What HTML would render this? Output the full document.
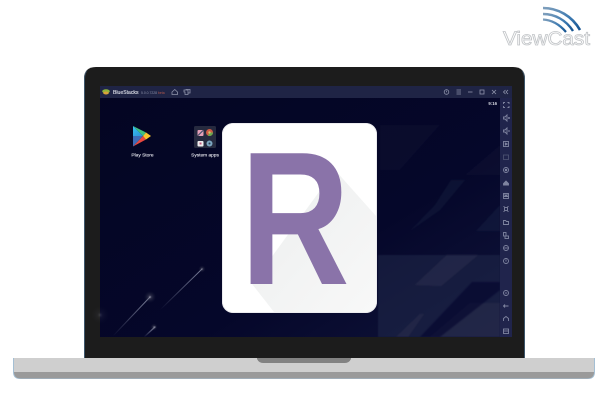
<!DOCTYPE html>
<html><head><meta charset="utf-8">
<style>
html,body{margin:0;padding:0;background:#fff;width:602px;height:414px;overflow:hidden}
svg{display:block}
text{font-family:"Liberation Sans",sans-serif}
</style></head><body>
<svg width="602" height="414" viewBox="0 0 602 414" xmlns="http://www.w3.org/2000/svg">
<defs>
<linearGradient id="bg" x1="0" y1="0" x2="1" y2="1">
<stop offset="0" stop-color="#040522"/><stop offset=".62" stop-color="#05072a"/><stop offset="1" stop-color="#10143a"/>
</linearGradient>
<radialGradient id="glow"><stop offset="0" stop-color="#aab" stop-opacity=".8"/><stop offset=".3" stop-color="#667" stop-opacity=".35"/><stop offset="1" stop-color="#334" stop-opacity="0"/></radialGradient>
<linearGradient id="arc" x1="0" y1="0" x2="1" y2="1"><stop offset="0" stop-color="#7f9fbc"/><stop offset=".6" stop-color="#3a78b0"/><stop offset="1" stop-color="#14528f"/></linearGradient>
<linearGradient id="gp1" x1="0" y1="0" x2="1" y2="1"><stop offset="0" stop-color="#35c4f0"/><stop offset="1" stop-color="#2b8fd8"/></linearGradient>
<linearGradient id="shd" x1="0" y1="0" x2="1" y2="1"><stop offset="0" stop-color="#eceeee"/><stop offset="1" stop-color="#f8f8f8"/></linearGradient>
<linearGradient id="s1" x1="1" y1="0" x2="0" y2="1"><stop offset="0" stop-color="#9ba0b8" stop-opacity=".8"/><stop offset="1" stop-color="#9ba0b8" stop-opacity="0"/></linearGradient>
<filter id="b" x="-5%" y="-5%" width="110%" height="110%"><feGaussianBlur stdDeviation=".7"/></filter>
<filter id="t" x="-5%" y="-5%" width="110%" height="110%"><feGaussianBlur stdDeviation=".3"/></filter>
<clipPath id="sc"><rect x="100" y="98" width="400" height="239"/></clipPath>
</defs>

<!-- ViewCast logo -->
<g fill="none" stroke="url(#arc)">
<path d="M543 8C558 8 572 16 580 30" stroke-width="2.600"/>
<path d="M543 14C555 14 566 20 573 31" stroke-width="2.400"/>
<path d="M543 19.500C552 20 560 25 566 32" stroke-width="2.200"/>
</g>
<text x="503" y="45" font-size="19" fill="#fff" stroke="#c2c5c8" stroke-width=".8" textLength="87" lengthAdjust="spacingAndGlyphs">ViewCast</text>

<!-- Lid -->
<path d="M84 358V79Q84 67 96 67H513Q525 67 525 79V358Z" fill="#1c1c1c"/>
<path d="M84 358V79Q84 72 88 70Q85 73 85 79V358Z" fill="#3d566b"/>
<path d="M525 358V79Q525 72 521 70Q524 73 524 79V358Z" fill="#3d566b"/>

<!-- Screen -->
<rect x="100" y="86" width="412" height="251" fill="url(#bg)"/>
<g fill="#262b4c" clip-path="url(#sc)"><g filter="url(#b)">
<polygon points="378,255 500,255 500,337 378,337" opacity=".5"/>
<polygon points="415,285 447,255 478,255 441,286" opacity=".6"/>
<polygon points="410,231 435,205 451,180 465,180 440,210" opacity=".25"/>
<polygon points="476,231 500,205 500,231" opacity=".3"/>
<polygon points="430,337 470,303 500,303 500,337" opacity=".55"/>
<polygon points="396,337 420,314 424,314 408,337" opacity=".5"/>
<polygon points="380,125 440,125 400,170 380,170" opacity=".1"/>
<polygon points="465,175 500,175 500,145" opacity=".12"/>
</g>
<polygon points="420,337 472,282 500,282 500,290 440,337" fill="#04062a" opacity=".55" filter="url(#b)"/>
</g>
<!-- shooting stars -->
<g fill="none" stroke-linecap="round">
<path d="M202 269L160 310" stroke="url(#s1)" stroke-width=".9"/>
<path d="M150 297L113 336" stroke="url(#s1)" stroke-width="1"/>
<path d="M155 327L144 337" stroke="url(#s1)" stroke-width="1.300"/>
</g>
<circle cx="202" cy="269" r="3.500" fill="url(#glow)"/>
<circle cx="150" cy="297" r="6" fill="url(#glow)"/>
<circle cx="154" cy="327" r="3.500" fill="url(#glow)"/>
<circle cx="100" cy="315" r="9" fill="url(#glow)" opacity=".3"/>

<!-- Title bar -->
<rect x="100" y="86" width="412" height="12" fill="#1f2445"/>
<ellipse cx="106" cy="91.300" rx="3.800" ry="2" fill="#8fb53a"/>
<ellipse cx="106" cy="93" rx="2.800" ry="1.500" fill="#d9a23a"/>
<text x="113" y="94" font-size="5.800" fill="#dfe1ea" stroke="#dfe1ea" stroke-width=".12" textLength="25.500" lengthAdjust="spacingAndGlyphs">BlueStacks</text>
<text x="141" y="94" font-size="3.400" fill="#8b90a8">5.0.0.7228</text>
<text x="158" y="94" font-size="3.400" fill="#b3574c">beta</text>
<g fill="none" stroke="#8f94ab" stroke-width=".8" filter="url(#t)">
<path d="M172 92L174.800 89.500L177.500 92V94.500H172Z"/>
<path d="M184 90H188V94.500H185V92H184ZM186 90V89.500H190V93H188"/>
<circle cx="446.500" cy="92" r="2.300"/>
<path d="M446.500 90.800V92.300"/>
<path d="M456.500 90H461M456.500 92H461M456.500 94H461"/>
<path d="M468 92H472.500"/>
<rect x="480" y="90" width="4" height="4"/>
<path d="M492 90L496 94M496 90L492 94"/>
<path d="M505.500 90L503.500 92L505.500 94M508 90L506 92L508 94"/>
</g>

<!-- Sidebar -->
<rect x="500" y="98" width="12" height="239" fill="#20244c"/>
<text x="497" y="105" font-size="4.300" font-weight="700" text-anchor="end" fill="#d8dae3">9:16</text>
<g fill="none" stroke="#7f84a0" stroke-width=".9" filter="url(#t)">
<path d="M503.500 104V102.500H505M507.500 102.500H509V104M503.500 106V107.500H505M507.500 107.500H509V106"/>
<path d="M503.500 117H505L507 115V121L505 119H503.500ZM508 118H510M509 117V119"/>
<path d="M503.500 130H505L507 128V134L505 132H503.500ZM508 131H510"/>
<rect x="503.500" y="141.500" width="5" height="5"/>
<path d="M505.300 143L507.300 144L505.300 145Z" fill="#7f84a0"/>
<rect x="503.500" y="155" width="5" height="4.500" stroke="#4c5070"/>
<circle cx="506" cy="170" r="2.500"/>
<circle cx="506" cy="170" r=".8" fill="#7f84a0"/>
<path d="M503.500 185V183.500L506 181L508.500 183.500V185Z" fill="#7f84a0"/>
<rect x="503.500" y="193.500" width="5" height="5"/>
<path d="M505 193.500V195.500H507V193.500M503.500 196.500H508.500"/>
<path d="M503.500 206.500H504.500M507.500 206.500H508.500M503.500 211.500H504.500M507.500 211.500H508.500"/>
<rect x="504.500" y="207.500" width="3" height="3"/>
<path d="M503.500 220.500H505.500L506.500 221.500H508.500V224.500H503.500Z"/>
<rect x="503.500" y="232.500" width="2.500" height="3.500"/>
<rect x="505" y="236" width="3.500" height="2.500"/>
<circle cx="506" cy="248" r="2.500"/>
<path d="M503.500 248H508.500"/>
<circle cx="506" cy="261" r="2.500"/>
<path d="M506 259.500V261.500"/>
<circle cx="506" cy="293" r="2.500"/>
<path d="M504.800 293H507.200"/>
<path d="M503.500 306H508.500M505 304.500L503.500 306L505 307.500"/>
<path d="M503.500 321V318.500L506 316.500L508.500 318.500V321"/>
<rect x="503.500" y="329" width="5" height="4.500"/>
<path d="M503.500 331H508.500"/>
</g>

<!-- Play Store icon -->
<polygon points="133,126 133,136 143,136" fill="url(#gp1)"/>
<polygon points="133,146.500 133,136 143,136" fill="#4378c9" opacity=".9"/>
<polygon points="133,126 143,136 146,132.500" fill="#3fc07f"/>
<polygon points="133,146.500 143,136 146,139.500" fill="#e9483f"/>
<polygon points="146,132.500 143,136 146,139.500 151,136" fill="#f8c52c"/>
<text x="142.500" y="156.300" font-size="4.800" fill="#e4e5ec" stroke="#e4e5ec" stroke-width=".1" text-anchor="middle">Play Store</text>

<!-- System apps -->
<rect x="194" y="126" width="22" height="22" rx="1.500" fill="#262a3f"/>
<rect x="197.500" y="130" width="6" height="6" rx="1" fill="#e5a0b8"/>
<path d="M198 135.500L203 130.500" stroke="#44506e" stroke-width="1.200"/>
<circle cx="209.500" cy="132.500" r="3.500" fill="#cf5a45"/>
<path d="M209.500 132.500L213 132.500A3.500 3.500 0 0 1 208 135.700Z" fill="#6aa84f"/>
<circle cx="209.500" cy="132.500" r="1.200" fill="#d9c06a"/>
<rect x="197.500" y="141" width="6" height="5.500" rx="1" fill="#eee"/>
<rect x="199.500" y="142.500" width="2" height="2" fill="#c0567c"/>
<circle cx="209.500" cy="143.500" r="3" fill="#7da6c0"/>
<circle cx="209.500" cy="143.500" r="1" fill="#2c3f55"/>
<text x="205" y="156.300" font-size="4.800" fill="#e4e5ec" stroke="#e4e5ec" stroke-width=".1" text-anchor="middle">System apps</text>

<!-- App card -->
<rect x="222" y="123" width="155" height="190" rx="11" fill="#fff"/>
<path d="M335 170L376 216V302Q376 312 366 312H274L252 284Z" fill="url(#shd)"/>
<rect x="222.500" y="123.500" width="154" height="189" rx="10.500" fill="none" stroke="#e6e6ea" stroke-width=".8"/>
<text transform="translate(240.500 284) scale(.795 1)" font-size="190" font-weight="700" fill="#8a73a9">R</text>

<!-- Base -->
<path d="M13 358H595V372Q595 379 588 379H20Q13 379 13 372Z" fill="#a4bfd4"/>
<path d="M14 358H594V372Q594 378.500 587 378.500H21Q14 378.500 14 372Z" fill="#9a9a9a"/>
<rect x="14" y="358" width="580" height="14" fill="#cfcfcf"/>
<path d="M257 358H351V359Q349 363 345 363H263Q259 363 257 359Z" fill="#828282"/>
</svg>
</body></html>
